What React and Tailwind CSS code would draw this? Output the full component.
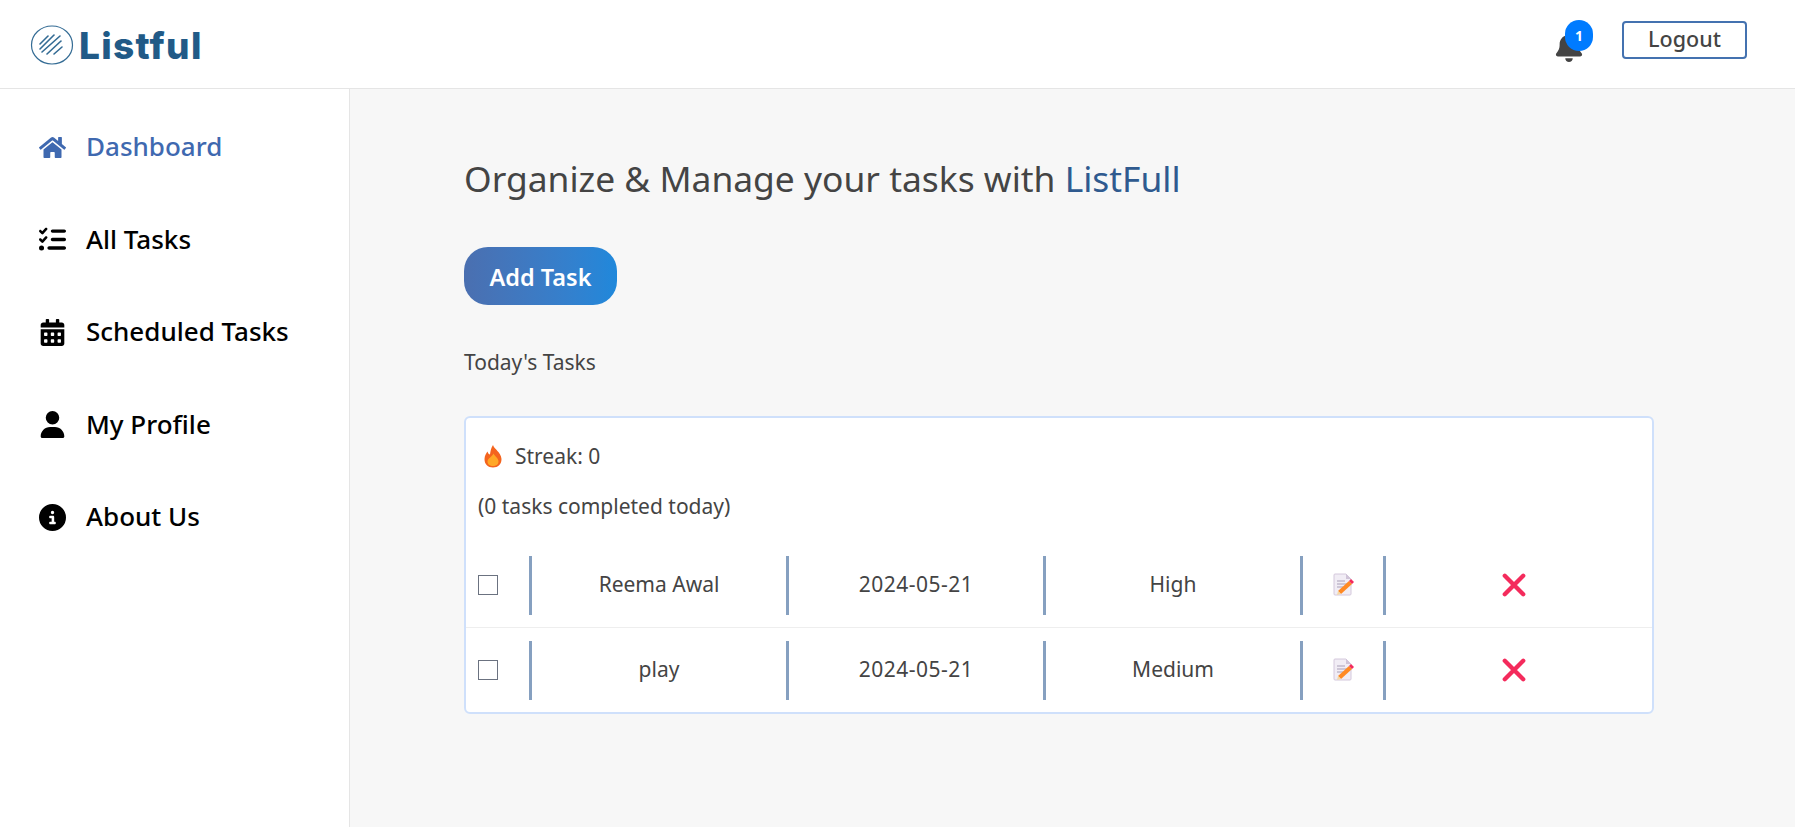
import React from "react";
import { FaHome, FaCalendarAlt } from "react-icons/fa";
import { FaListCheck, FaUser, FaCircleInfo, FaBell } from "react-icons/fa6";

const navItems = [
  { label: "Dashboard", icon: FaHome, active: true },
  { label: "All Tasks", icon: FaListCheck },
  { label: "Scheduled Tasks", icon: FaCalendarAlt },
  { label: "My Profile", icon: FaUser },
  { label: "About Us", icon: FaCircleInfo },
];

const tasks = [
  { name: "Reema Awal", date: "2024-05-21", priority: "High" },
  { name: "play", date: "2024-05-21", priority: "Medium" },
];

const Logo = () => (
  <svg width="44" height="40" viewBox="0 0 44 40" fill="none" stroke="#336b94">
    <ellipse cx="22" cy="20" rx="20.5" ry="19" strokeWidth="1.2" />
    <g strokeWidth="1.6" strokeLinecap="round">
      <path d="M10 19 L18 11" />
      <path d="M10 24 L24 10" />
      <path d="M12 27 L30 11" />
      <path d="M17 29 L31 16" />
      <path d="M24 29 L32 22" />
    </g>
  </svg>
);

const Flame = () => (
  <svg width="18" height="23" viewBox="0 0 18 23">
    <path d="M9 0 C10 4 17 7 17.5 14 C17.5 19.5 14 22.5 9 22.5 C4 22.5 .5 19.5 .5 14 C.5 10.5 2.5 8 3.5 6.5 C4 8.5 5 9.5 6 9.5 C6.5 6 7 3 9 0 Z" fill="#f4641e" />
    <path d="M9.5 8.5 C10.5 11 14.5 13 14.5 16.5 C14.5 19.5 12 21 9 21 C6 21 3.5 19.5 3.5 16.5 C3.5 13.5 8 12 9.5 8.5 Z" fill="#ffa726" />
  </svg>
);

const MemoIcon = () => (
  <svg width="22" height="24" viewBox="0 0 22 24">
    <path d="M1 2 Q1 1 2 1 H13 L18 6 V21 Q18 22 17 22 H2 Q1 22 1 21 Z" fill="#f1edf5" stroke="#d4c8dc" />
    <path d="M13 1 V6 H18 Z" fill="#cfc4d8" />
    <path d="M4 8 H12 M4 11 H14 M4 14 H10" stroke="#a9a0b8" strokeWidth="1.2" />
    <path d="M5 18 L16 8 L19 11 L8 21 Z" fill="#ff8a24" />
    <path d="M16 8 L18 6 L21 9 L19 11 Z" fill="#f4295d" />
    <path d="M5 18 L8 21 L4 22 Z" fill="#f3d9a8" />
  </svg>
);

const CrossIcon = () => (
  <svg width="26" height="26" viewBox="0 0 24 24" stroke="#f42b5c" strokeWidth="4" strokeLinecap="round">
    <path d="M3.5 3.5 L20.5 20.5 M20.5 3.5 L3.5 20.5" />
  </svg>
);

const Divider = () => <div className="w-[3px] h-[59px] bg-[#86a0c0] shrink-0" />;

const TaskRow = ({ task, last }) => (
  <div className={`flex items-center pl-[12px] ${last ? "h-[84px]" : "h-[85px] border-b border-[#eeeeee]"}`}>
    <div className="w-[20px] h-[20px] border border-[#6b7280] bg-white shrink-0" />
    <div className="w-[31px] shrink-0" />
    <Divider />
    <div className="w-[254px] text-center">{task.name}</div>
    <Divider />
    <div className="w-[254px] text-center tracking-[0.5px]">{task.date}</div>
    <Divider />
    <div className="w-[254px] text-center">{task.priority}</div>
    <Divider />
    <div className="w-[80px] flex justify-center pl-[2px]"><MemoIcon /></div>
    <Divider />
    <div className="w-[256px] flex justify-center"><CrossIcon /></div>
  </div>
);

export default function App() {
  return (
    <div className="h-[827px] flex flex-col bg-[#f7f7f7] text-[#444444] font-['Noto_Sans','Open_Sans',sans-serif] overflow-hidden">
      <header className="h-[89px] shrink-0 bg-white border-b border-[#e5e5e5] flex items-center justify-between pl-[30px] pr-[48px]">
        <div className="flex items-center gap-[5px] mt-[2px]">
          <Logo />
          <span className="text-[37px] font-extrabold text-[#215a87] tracking-[1.3px] font-['Inter',sans-serif] mt-[2px]">Listful</span>
        </div>
        <div className="flex items-center -mt-[9px]">
          <div className="relative mr-[38px] text-[#444444] mt-[14px]">
            <FaBell size={30} />
            <span className="absolute -top-[12px] left-[11px] w-[28px] h-[31px] rounded-full bg-[#007bff] text-white text-[14px] font-bold flex items-center justify-center">1</span>
          </div>
          <button className="w-[125px] h-[38px] rounded-[4px] border-2 border-[#4472b0] bg-white text-[21.5px] font-medium">Logout</button>
        </div>
      </header>
      <div className="flex flex-1 min-h-0">
        <aside className="w-[350px] shrink-0 bg-white border-r border-[#e5e5e5] pt-[13px] pl-[39px]">
          {navItems.map((item) => (
            <div key={item.label} className={`flex items-center h-[92.5px] text-[26px] font-medium ${item.active ? "text-[#3f69b0]" : "text-black"}`}>
              <div className="w-[47px] shrink-0 -mt-[2px]"><item.icon size={27} /></div>
              <span className="-mt-[3px]">{item.label}</span>
            </div>
          ))}
        </aside>
        <main className="flex-1 pl-[114px] pr-[141px] pt-[64px]">
          <h1 className="text-[35.4px] leading-[50px] font-normal">
            Organize &amp; Manage your tasks with <span className="text-[#2f5a8f]">ListFull</span>
          </h1>
          <button className="mt-[44px] block w-[153px] h-[58px] pt-[3px] rounded-[24px] bg-gradient-to-r from-[#4a6fb0] to-[#1f88db] text-white text-[23.5px] font-semibold">Add Task</button>
          <p className="mt-[42px] text-[21px] leading-[30px]">Today's Tasks</p>
          <div className="mt-[39px] bg-white border-2 border-[#cfe0fb] rounded-[6px] text-[21px]">
            <div className="flex items-center gap-[13px] pl-[18px] pt-[14px] h-[63px]">
              <Flame />
              <span>Streak: 0</span>
            </div>
            <p className="pl-[12px] pt-[10px] h-[62px] leading-[30px]">(0 tasks completed today)</p>
            <TaskRow task={tasks[0]} />
            <TaskRow task={tasks[1]} last />
          </div>
        </main>
      </div>
    </div>
  );
}
